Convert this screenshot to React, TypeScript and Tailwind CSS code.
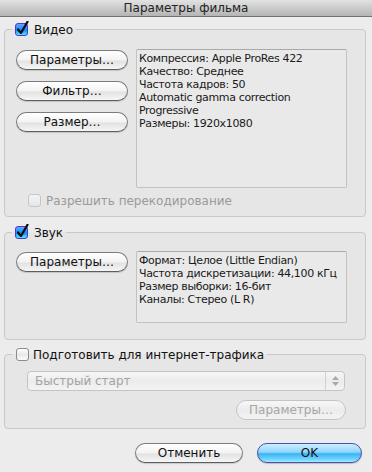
import React, { useId } from "react";

const FONT = "font-['DejaVu_Sans','Noto_Sans',sans-serif]";

function CheckOn() {
  const id = useId().replace(/:/g, "");
  return (
    <svg width="15" height="15" viewBox="0 0 15 15" className="block shrink-0">
      <defs>
        <linearGradient id={`g${id}`} x1="0" y1="0" x2="0" y2="1">
          <stop offset="0" stopColor="#a98cff" />
          <stop offset="0.2" stopColor="#3fa4ff" />
          <stop offset="0.55" stopColor="#0b8cff" />
          <stop offset="1" stopColor="#5cf2ff" />
        </linearGradient>
      </defs>
      <rect x="0.5" y="2.5" width="12" height="12" rx="2.5" fill={`url(#g${id})`} stroke="#5238c8" />
      <path d="M3 8.5 L6 12 L12.5 0.8" fill="none" stroke="#0a0a0a" strokeWidth="2.2" strokeLinecap="round" strokeLinejoin="round" />
    </svg>
  );
}

function CheckOff({ disabled }: { disabled?: boolean }) {
  return (
    <span
      className={`block w-[13px] h-[13px] rounded-[3px] shrink-0 border ${
        disabled
          ? "border-[#c6c6c6] bg-[linear-gradient(to_bottom,#f4f4f4,#e6e6e6)]"
          : "border-[#8c8c8c] bg-[linear-gradient(to_bottom,#ffffff,#e9e9e9,#fbfbfb)]"
      }`}
    />
  );
}

function AquaButton({ children, w, disabled }: { children: React.ReactNode; w: string; disabled?: boolean }) {
  return (
    <div
      className={`${w} h-[20px] rounded-full border flex items-center justify-center text-[12px] leading-none ${
        disabled
          ? "border-[#c4c4c4] text-[#a6a6a6] bg-[linear-gradient(to_bottom,#f7f7f7,#ececec,#f4f4f4)]"
          : "border-[#7c7c7c] border-b-[#5e5e5e] text-[#111] bg-[linear-gradient(to_bottom,#ffffff_0%,#f3f3f3_50%,#e2e2e2_55%,#f6f6f6_100%)] shadow-[0_1px_1px_rgba(0,0,0,0.15)]"
      }`}
    >
      {children}
    </div>
  );
}

function InfoBox({ lines, h }: { lines: string[]; h: string }) {
  return (
    <div className={`w-[211px] ${h} border border-[#c2c2c2] border-t-[#a9a9a9] rounded-[2px] bg-[#e9e9e9] px-[2px] pt-[2px] text-[11px] leading-[13px] text-[#1a1a1a] tracking-[-0.35px]`}>
      {lines.map((l) => (
        <div key={l} className="whitespace-nowrap">{l}</div>
      ))}
    </div>
  );
}

export default function App() {
  return (
    <div className={`w-[372px] h-[472px] bg-[#ececec] flex flex-col ${FONT} overflow-hidden`}>
      <div className="h-[17px] shrink-0 bg-[linear-gradient(to_bottom,#e2e2e2,#b4b4b4)] border-b border-[#727272] flex items-center justify-center text-[12px] leading-none text-[#222]">
        Параметры фильма
      </div>

      <div className="flex flex-col">
        {/* Video */}
        <fieldset className="ml-[4px] w-[362px] mt-[6px] border border-[#c9c9c9] rounded-[4px] bg-[#e6e6e6] pl-[11px] pr-[17px] pt-[13px] pb-[9px]">
          <legend className="-ml-[4px] px-[3px] h-[13px] flex items-center gap-[4px] text-[12px] leading-none text-[#111]">
            <span className="-mt-[2px]"><CheckOn /></span>
            <span>Видео</span>
          </legend>
          <div className="flex gap-[8px]">
            <div className="flex flex-col gap-[11px] pt-[1px]">
              <AquaButton w="w-[112px]">Параметры…</AquaButton>
              <AquaButton w="w-[112px]">Фильтр…</AquaButton>
              <AquaButton w="w-[112px]">Размер…</AquaButton>
            </div>
            <InfoBox
              h="h-[139px]"
              lines={[
                "Компрессия: Apple ProRes 422",
                "Качество: Среднее",
                "Частота кадров: 50",
                "Automatic gamma correction",
                "Progressive",
                "Размеры: 1920x1080",
              ]}
            />
          </div>
          <div className="mt-[6px] ml-[12px] h-[13px] flex items-center gap-[5px] text-[12px] leading-none text-[#9a9a9a]">
            <CheckOff disabled />
            <span>Разрешить перекодирование</span>
          </div>
        </fieldset>

        {/* Sound */}
        <fieldset className="ml-[4px] w-[362px] mt-[9px] border border-[#c9c9c9] rounded-[4px] bg-[#e6e6e6] pl-[11px] pr-[17px] pt-[12px] pb-[16px]">
          <legend className="-ml-[4px] px-[3px] h-[13px] flex items-center gap-[4px] text-[12px] leading-none text-[#111]">
            <span className="-mt-[2px]"><CheckOn /></span>
            <span>Звук</span>
          </legend>
          <div className="flex gap-[8px]">
            <div className="pt-[1px]">
              <AquaButton w="w-[112px]">Параметры…</AquaButton>
            </div>
            <InfoBox
              h="h-[72px]"
              lines={[
                "Формат: Целое (Little Endian)",
                "Частота дискретизации: 44,100 кГц",
                "Размер выборки: 16-бит",
                "Каналы: Стерео (L R)",
              ]}
            />
          </div>
        </fieldset>

        {/* Internet */}
        <fieldset className="ml-[4px] w-[362px] mt-[8px] border border-[#c9c9c9] rounded-[4px] bg-[#e6e6e6] pl-[11px] pr-[19px] pt-[10px] pb-[8px]">
          <legend className="-ml-[4px] px-[3px] h-[13px] flex items-center gap-[4px] text-[12px] leading-none text-[#111]">
            <span className="ml-[1px]"><CheckOff /></span>
            <span>Подготовить для интернет-трафика</span>
          </legend>
          <div className="ml-[11px] w-[318px] h-[20px] rounded-[4px] border border-[#c4c4c4] bg-[linear-gradient(to_bottom,#f6f6f6,#ececec,#f3f3f3)] flex items-stretch">
            <div className="flex-1 flex items-center pl-[7px] text-[12px] leading-none text-[#a3a3a3]">Быстрый старт</div>
            <div className="w-[19px] border-l border-[#d0d0d0] flex flex-col items-center justify-center gap-[2px]">
              <svg width="7" height="4" viewBox="0 0 7 4"><path d="M3.5 0 L7 4 L0 4 Z" fill="#a8a8a8" /></svg>
              <svg width="7" height="4" viewBox="0 0 7 4"><path d="M0 0 L7 0 L3.5 4 Z" fill="#a8a8a8" /></svg>
            </div>
          </div>
          <div className="mt-[9px] flex justify-end">
            <AquaButton w="w-[110px]" disabled>Параметры…</AquaButton>
          </div>
        </fieldset>

        {/* Bottom buttons */}
        <div className="mt-[14px] flex justify-end gap-[14px] pr-[10px]">
          <AquaButton w="w-[108px]">Отменить</AquaButton>
          <div className="w-[105px] h-[20px] rounded-full border border-[#4a4fb0] flex items-center justify-center text-[12px] leading-none text-[#111] bg-[linear-gradient(to_bottom,#cdeeff_0%,#8fd6fb_45%,#3cb3f5_55%,#6fd6fd_85%,#a5ecff_100%)] shadow-[0_1px_1px_rgba(0,0,0,0.2)]">
            OK
          </div>
        </div>
      </div>
    </div>
  );
}
